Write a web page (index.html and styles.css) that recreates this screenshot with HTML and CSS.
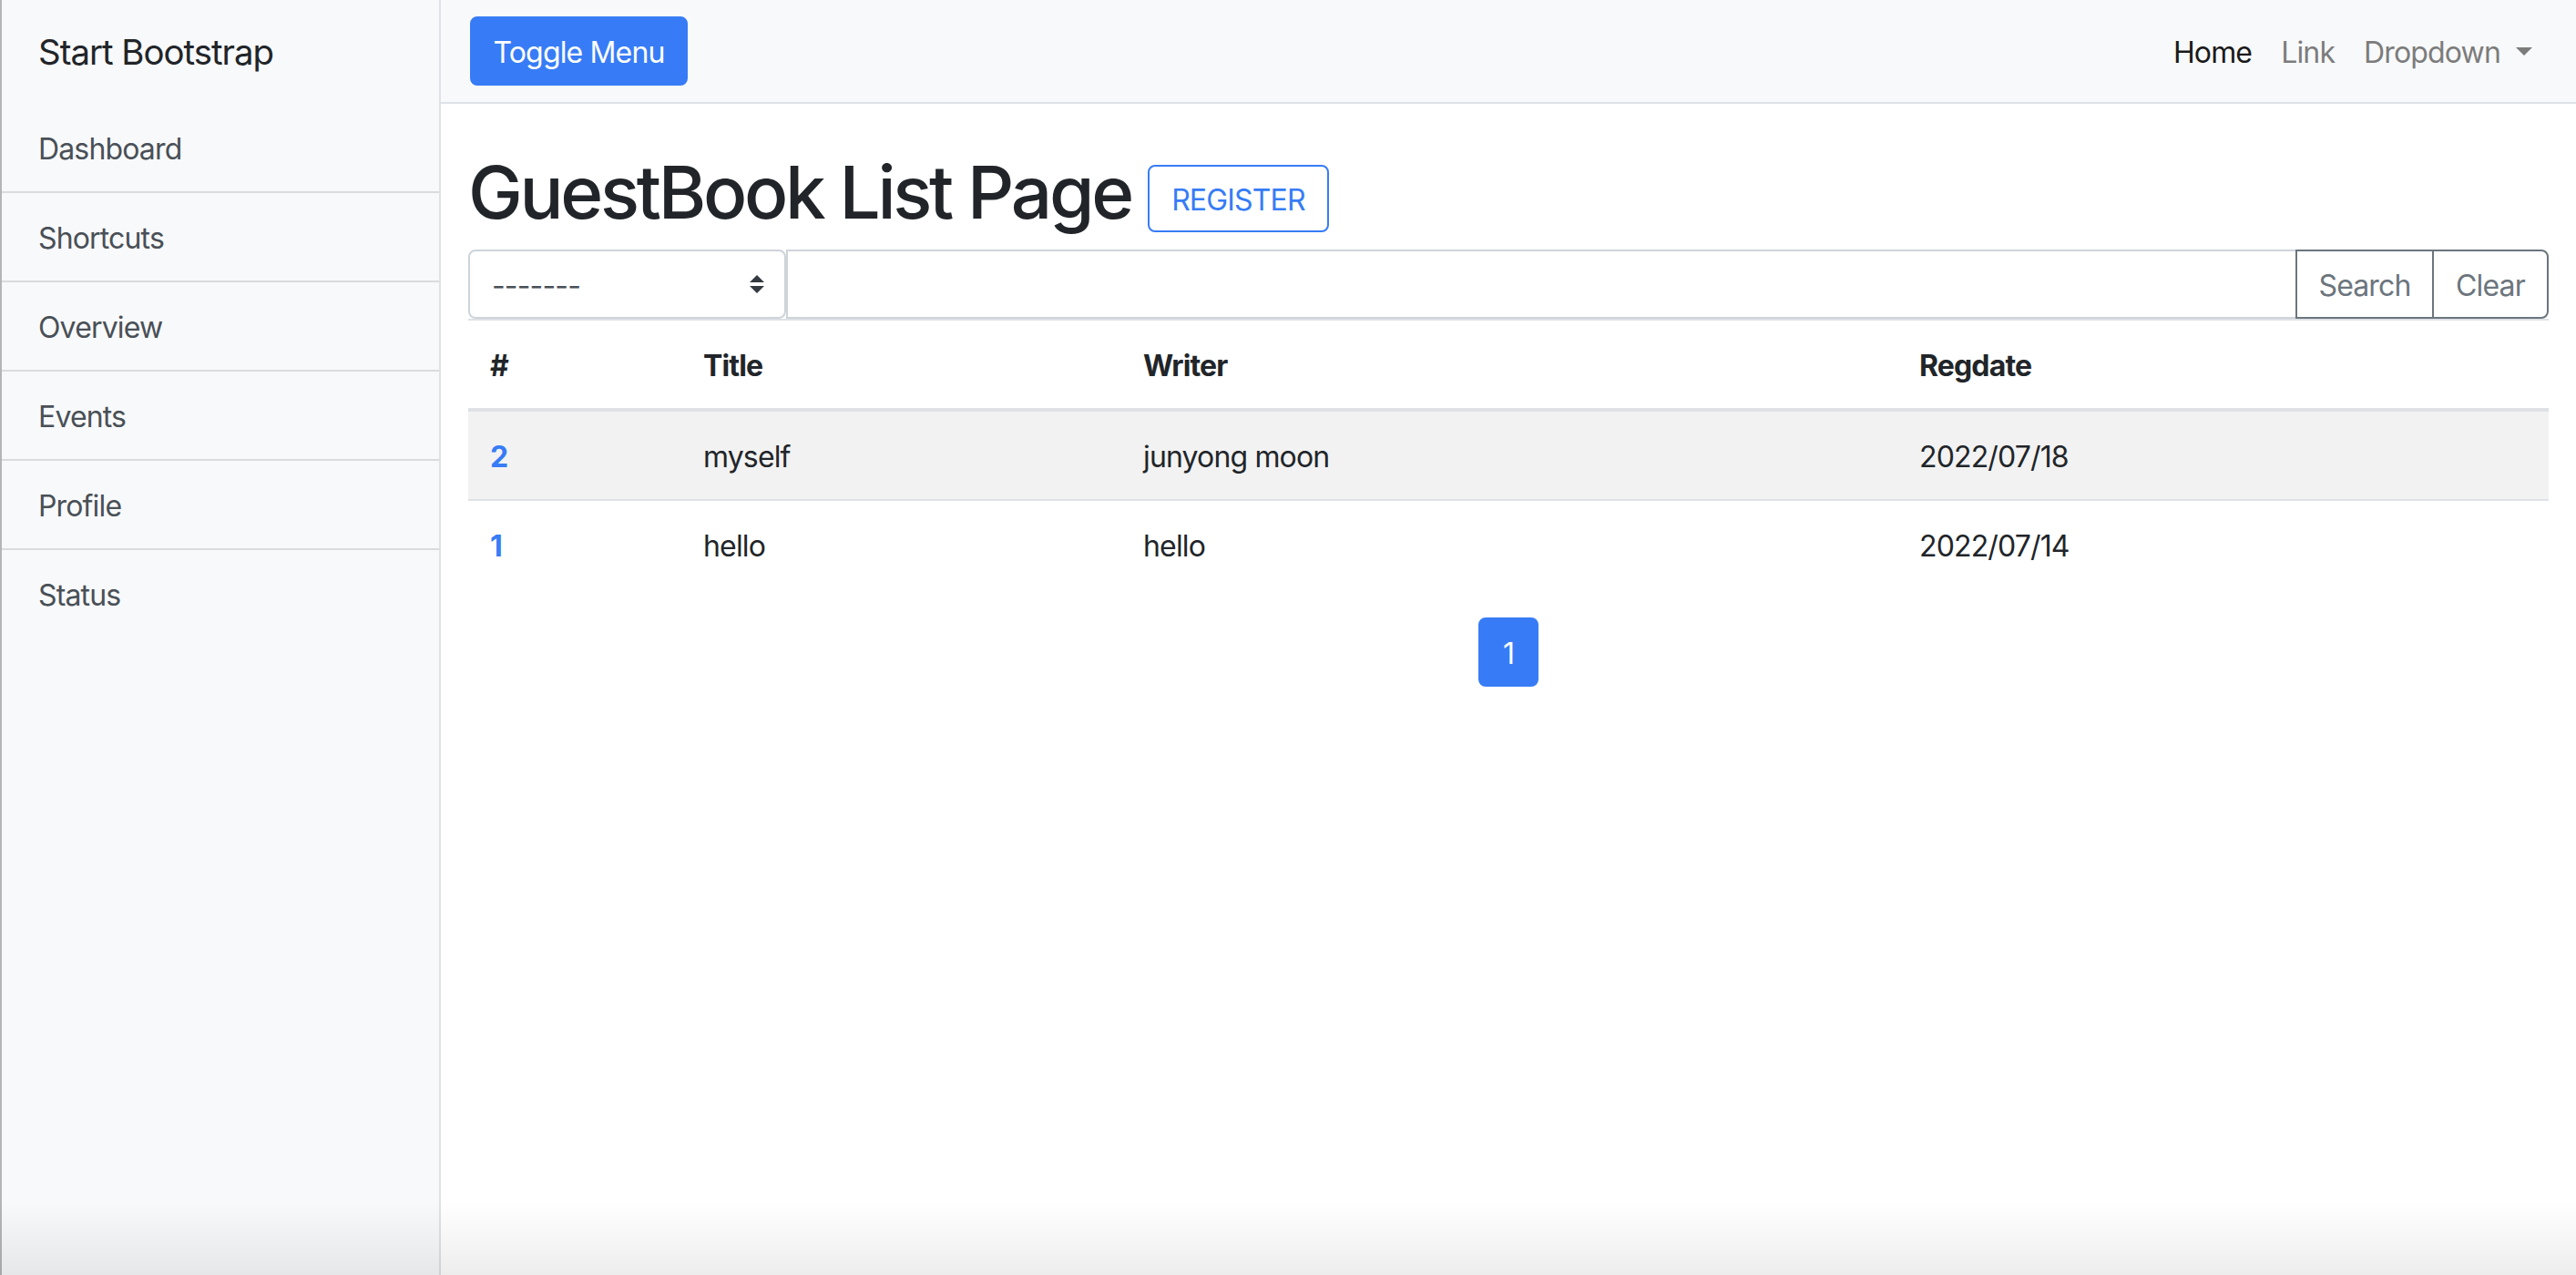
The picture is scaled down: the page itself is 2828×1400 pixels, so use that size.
FILE: index.html
```html
<!DOCTYPE html>
<html lang="en">
<head>
<meta charset="utf-8">
<title>GuestBook List Page</title>
<link rel="stylesheet" href="styles.css">
</head>
<body>
<div class="app">
  <aside class="sidebar">
    <div class="sidebar-heading">Start Bootstrap</div>
    <div class="list-group">
      <a class="list-item" href="#">Dashboard</a>
      <a class="list-item" href="#">Shortcuts</a>
      <a class="list-item" href="#">Overview</a>
      <a class="list-item" href="#">Events</a>
      <a class="list-item" href="#">Profile</a>
      <a class="list-item" href="#">Status</a>
    </div>
  </aside>
  <div class="page">
    <nav class="navbar">
      <button class="btn btn-primary toggle" type="button">Toggle Menu</button>
      <ul class="navbar-nav">
        <li><a class="nav-link active" href="#">Home</a></li>
        <li><a class="nav-link" href="#">Link</a></li>
        <li><a class="nav-link" href="#">Dropdown<span class="caret"></span></a></li>
      </ul>
    </nav>
    <main class="content">
      <h1 class="title">GuestBook List Page <span class="register-wrap"><button class="btn btn-outline-primary register" type="button">REGISTER</button></span></h1>
      <form class="search" action="#" method="get">
        <div class="select-wrap">
          <select class="custom-select" name="type">
            <option>-------</option>
            <option>제목</option>
            <option>내용</option>
            <option>작성자</option>
          </select>
          <svg class="select-arrows" viewBox="0 0 4 5" aria-hidden="true"><path fill="#343a40" d="M2 0L0 2h4zm0 5L0 3h4z"/></svg>
        </div>
        <input class="form-control" type="text" name="keyword">
        <button class="btn btn-outline-secondary btn-search" type="button">Search</button>
        <button class="btn btn-outline-secondary btn-clear" type="button">Clear</button>
      </form>
      <table class="table">
        <thead>
          <tr>
            <th class="col-no">#</th>
            <th class="col-title">Title</th>
            <th class="col-writer">Writer</th>
            <th class="col-date">Regdate</th>
          </tr>
        </thead>
        <tbody>
          <tr>
            <th><a class="num-link" href="#">2</a></th>
            <td>myself</td>
            <td>junyong moon</td>
            <td>2022/07/18</td>
          </tr>
          <tr>
            <th><a class="num-link" href="#">1</a></th>
            <td>hello</td>
            <td>hello</td>
            <td>2022/07/14</td>
          </tr>
        </tbody>
      </table>
      <ul class="pagination">
        <li><a class="page-link" href="#">1</a></li>
      </ul>
    </main>
  </div>
</div>
<div class="window-shade"></div>
</body>
</html>
```

FILE: styles.css
```css
* {
  box-sizing: border-box;
}

html, body {
  margin: 0;
  padding: 0;
}

body {
  font-family: Inter, "Liberation Sans", "Noto Sans CJK KR", sans-serif;
  font-size: 32px;
  line-height: 48px;
  letter-spacing: -0.85px;
  color: #212529;
  background: #ffffff;
  overflow: hidden;
}

.app {
  display: flex;
  min-height: 100vh;
}

/* Sidebar */
.sidebar {
  width: 484px;
  flex: none;
  background: #f8f9fa;
  border-left: 2px solid #b3b5b7;
  border-right: 2px solid #dee2e6;
}

.sidebar-heading {
  padding: 28px 40px;
  font-size: 38.4px;
  line-height: 58px;
  letter-spacing: -1px;
  color: #212529;
}

.list-group {
  display: flex;
  flex-direction: column;
}

.list-item {
  display: block;
  padding: 26px 40px 22px;
  font-size: 32px;
  line-height: 48px;
  color: #495057;
  text-decoration: none;
  border-bottom: 2px solid #dadbdc;
}

.list-item:last-child {
  border-bottom: 0;
}

/* Page */
.page {
  flex: 1;
  min-width: 0;
  display: flex;
  flex-direction: column;
}

.navbar {
  display: flex;
  align-items: center;
  justify-content: space-between;
  height: 114px;
  padding: 18px 32px;
  background: #f8f9fa;
  border-bottom: 2px solid #dee2e6;
}

.btn {
  display: inline-block;
  font-family: inherit;
  font-size: 32px;
  line-height: 48px;
  font-weight: 400;
  letter-spacing: -0.85px;
  padding: 14px 0 10px;
  border: 2px solid transparent;
  border-radius: 8px;
  background: none;
  text-align: center;
  cursor: pointer;
}

.toggle {
  width: 239px;
  height: 76px;
  color: #ffffff;
  background: #377cf6;
  border-color: #377cf6;
}

.navbar-nav {
  display: flex;
  list-style: none;
  margin: 0;
  padding: 0;
}

.nav-link {
  display: block;
  padding: 10px 16px 6px;
  font-size: 32px;
  line-height: 48px;
  color: #7c7c7c;
  text-decoration: none;
}

.nav-link.active {
  color: #1a1a1a;
}

.caret {
  display: inline-block;
  margin-left: 17px;
  border-top: 9px solid #7c7c7c;
  border-left: 9px solid transparent;
  border-right: 9px solid transparent;
  vertical-align: 8px;
}

/* Content */
.content {
  padding: 0 30px;
}

.title {
  margin: 48px 0 16px;
  padding-top: 2px;
  height: 96px;
  font-size: 80px;
  line-height: 94px;
  font-weight: 500;
  letter-spacing: -3.3px;
  color: #212529;
}

.register {
  width: 199px;
  padding: 13px 0 9px;
  color: #377cf6;
  border-color: #377cf6;
  background: #ffffff;
  vertical-align: 9px;
}

.search {
  display: flex;
  height: 76px;
  margin: 0;
}

.select-wrap {
  position: relative;
  width: 349px;
  flex: none;
}

.custom-select {
  -webkit-appearance: none;
  appearance: none;
  width: 100%;
  height: 76px;
  padding: 14px 56px 10px 24px;
  font-family: inherit;
  font-size: 32px;
  line-height: 48px;
  letter-spacing: -0.85px;
  color: #495057;
  background: #ffffff;
  border: 2px solid #ced4da;
  border-radius: 8px;
  outline: none;
}

.select-arrows {
  position: absolute;
  right: 24px;
  top: 28px;
  width: 16px;
  height: 20px;
  pointer-events: none;
}

.form-control {
  flex: 1;
  min-width: 0;
  height: 76px;
  padding: 12px 24px;
  font-family: inherit;
  font-size: 32px;
  line-height: 48px;
  color: #495057;
  background: #ffffff;
  border: 2px solid #ced4da;
  border-right: 0;
  border-radius: 0;
  outline: none;
}

.btn-outline-secondary {
  height: 76px;
  color: #6c757d;
  border-color: #6c757d;
  background: #ffffff;
  border-radius: 0;
}

.btn-search {
  width: 152px;
}

.btn-clear {
  width: 128px;
  margin-left: -2px;
  border-radius: 0 8px 8px 0;
}

/* Table */
.table {
  width: 100%;
  table-layout: fixed;
  border-collapse: separate;
  border-spacing: 0;
  margin: 0 0 32px;
  font-size: 32px;
  line-height: 48px;
  color: #212529;
}

.table th,
.table td {
  padding: 26px 24px 22px;
  text-align: left;
  vertical-align: top;
}

.table th {
  font-weight: 700;
}

.table thead th {
  border-top: 2px solid #dee2e6;
  border-bottom: 4px solid #dee2e6;
}

.table tbody tr + tr > * {
  border-top: 2px solid #dee2e6;
}

.table tbody tr:nth-child(odd) {
  background: #f2f2f2;
}

.col-no { width: 234px; }
.col-title { width: 483px; }
.col-writer { width: 852px; }

.num-link {
  color: #377cf6;
  text-decoration: none;
}

/* Pagination */
.pagination {
  display: flex;
  justify-content: center;
  list-style: none;
  margin: 0;
  padding: 0;
}

.page-link {
  display: block;
  width: 66px;
  padding: 18px 0 14px;
  font-size: 32px;
  line-height: 40px;
  text-align: center;
  color: #ffffff;
  background: #377cf6;
  border: 2px solid #377cf6;
  border-radius: 8px;
  text-decoration: none;
}

.window-shade {
  position: fixed;
  left: 0;
  right: 0;
  bottom: 0;
  height: 80px;
  background: linear-gradient(rgba(0, 0, 0, 0), rgba(0, 0, 0, 0.07));
  pointer-events: none;
}
```
